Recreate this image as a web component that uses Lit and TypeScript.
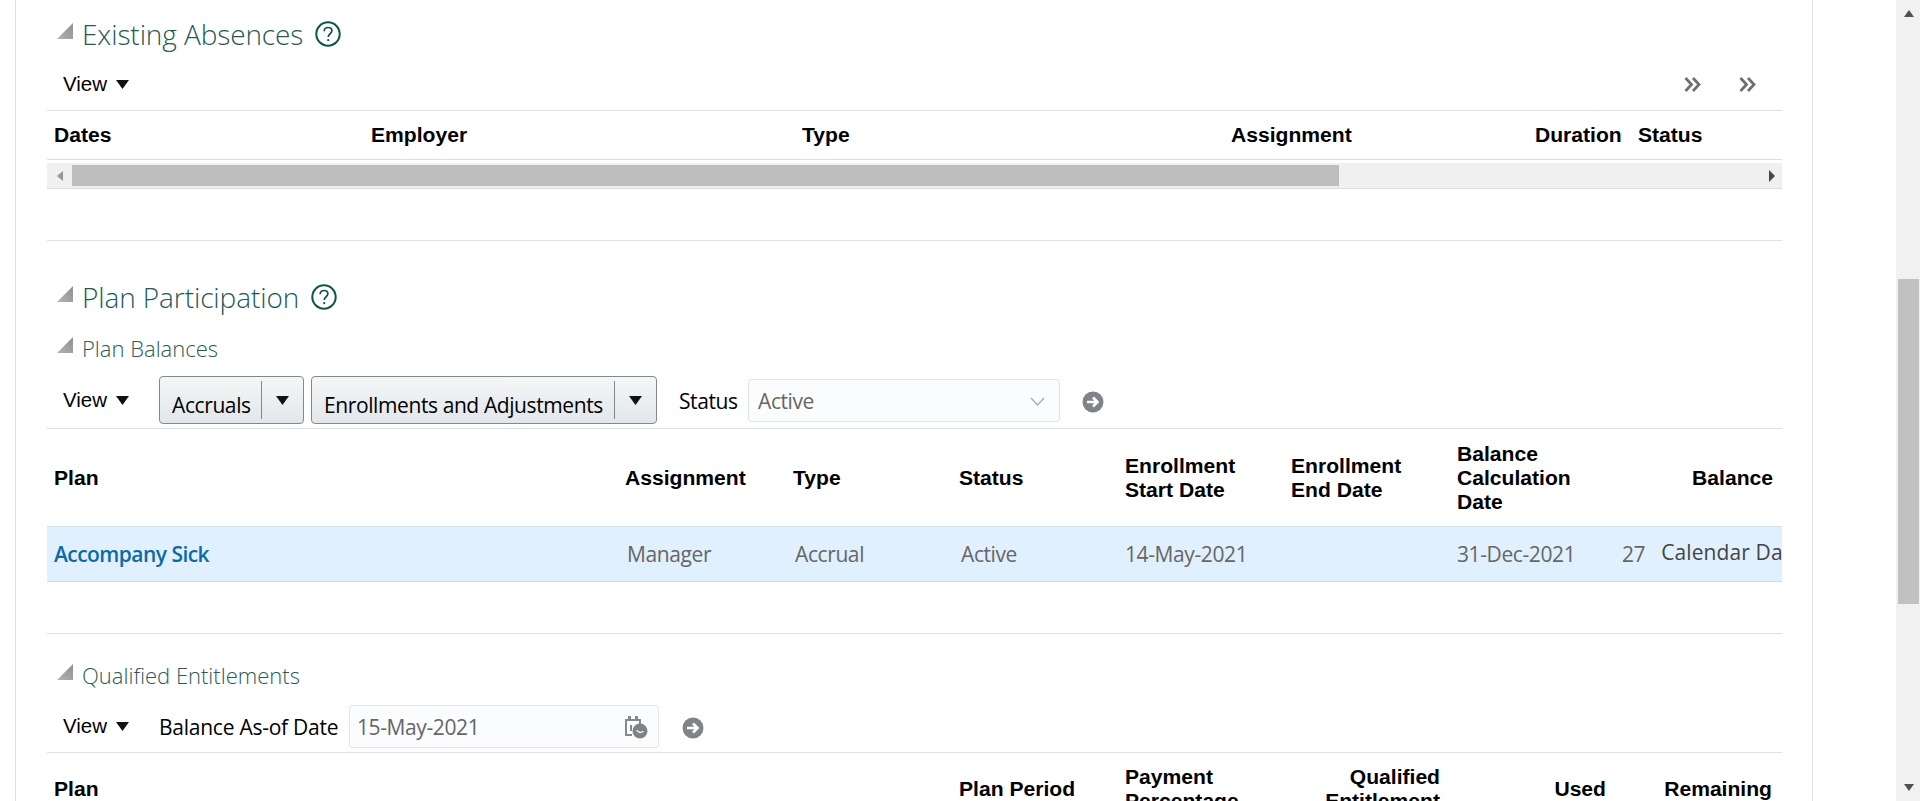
import { LitElement, html, css } from "lit";
import { customElement } from "lit/decorators.js";

const tri = html`<svg class="tri" viewBox="0 0 16 16"><defs><linearGradient id="g" x1="0" y1="1" x2="1" y2="0"><stop offset="0" stop-color="#b4b4b4"/><stop offset="1" stop-color="#8e8e8e"/></linearGradient></defs><path d="M0 16 L16 0 V16 Z" fill="url(#g)"/></svg>`;
const help = html`<svg class="help" viewBox="0 0 26 26"><circle cx="13" cy="13" r="11.7" fill="none" stroke="#0f5449" stroke-width="2"/><path d="M9.2 10.2c0-2.3 1.7-3.7 3.9-3.7s3.8 1.3 3.8 3.3c0 2.9-3.7 3-3.7 6.2" fill="none" stroke="#0f5449" stroke-width="1.7"/><circle cx="13.2" cy="19.2" r="1.1" fill="#0f5449"/></svg>`;
const caret = html`<svg class="caret" viewBox="0 0 13 9"><path d="M0 0 H13 L6.5 9 Z" fill="#111"/></svg>`;
const chev = html`<svg class="chev" viewBox="0 0 17 15"><path d="M1.5 1 L7.5 7.5 L1.5 14 M9 1 L15 7.5 L9 14" fill="none" stroke="#707070" stroke-width="2.8"/></svg>`;
const go = html`<svg class="go" viewBox="0 0 22 22"><circle cx="11" cy="11" r="10.5" fill="#808488"/><path d="M5 11 H15 M11 6.5 L15.5 11 L11 15.5" fill="none" stroke="#fff" stroke-width="2.6"/></svg>`;
const cal = html`<svg class="cal" viewBox="0 0 26 24"><path d="M2 4 H18 V9 H16 V6 H4 V19 H9 V21 H2 Z" fill="#85898d"/><rect x="5" y="1" width="3" height="5" fill="#85898d"/><rect x="12" y="1" width="3" height="5" fill="#85898d"/><path d="M7 10 h2 v6 h-2 z" fill="#85898d"/><circle cx="17" cy="16" r="7.5" fill="#7f8387"/><path d="M13.5 15.5 L17 17.5 L20.5 16.5" fill="none" stroke="#fff" stroke-width="1.3"/></svg>`;

@customElement("app-root")
export class AppRoot extends LitElement {
  static styles = css`
    :host { display: flex; width: 1920px; height: 801px; overflow: hidden; background: #fff; font-family: "Liberation Sans", Arial, sans-serif; color: #000; }
    .gutter { width: 15px; flex: none; }
    .panel { flex: none; border-left: 1px solid #dbe2e6; border-right: 1px solid #dbe2e6; padding-left: 31px; padding-right: 30px; width: 1735px; overflow: hidden; }
    .side { width: 83px; flex: none; }
    .scroll { width: 25px; flex: none; background: #f1f1f1; display: flex; flex-direction: column; align-items: center; }
    .scroll .up { width: 0; height: 0; border-left: 5.5px solid transparent; border-right: 5.5px solid transparent; border-bottom: 7px solid #505050; margin-top: 10px; }
    .scroll .thumb { width: 21px; height: 325px; background: #c1c1c1; margin-top: 262px; }
    .scroll .down { width: 0; height: 0; border-left: 5.5px solid transparent; border-right: 5.5px solid transparent; border-top: 7px solid #505050; margin-top: 180px; }

    .title { display: flex; align-items: center; height: 40px; }
    .t1 { margin-top: 14px; }
    .t2 { margin-top: 36px; }
    .t3 { margin-top: 11px; }
    .t4 { margin-top: 21px; }
    .tri { width: 16px; height: 16px; margin-left: 10px; flex: none; position: relative; top: -3px; }
    .title h2 { margin: 0 0 0 9px; font: 300 28px "Open Sans", sans-serif; color: #1f5a55; white-space: nowrap; letter-spacing: -0.1px; }
    .title h3 { margin: 0 0 0 9px; font: 300 22px "Open Sans", sans-serif; color: #2b5a58; white-space: nowrap; }
    .help { width: 26px; height: 26px; margin-left: 12px; flex: none; }

    .bar { display: flex; align-items: center; border-bottom: 1px solid #dbe2e6; box-sizing: border-box; }
    .bar.a { height: 57px; padding-top: 4px; }
    .bar.b { height: 61px; padding-top: 4px; }
    .bar.c { height: 58px; padding-top: 5px; }
    .view { display: flex; align-items: center; font-size: 20.5px; margin-left: 16px; flex: none; width: 96px; }
    .caret { width: 13px; height: 9px; margin-left: 9px; flex: none; }
    .grow { flex: 1; }
    .chev { width: 17px; height: 15px; margin-right: 26px; margin-left: 21px; flex: none; }
    .chev + .chev { margin-left: 12px; }

    .seg { display: flex; align-items: center; height: 48px; box-sizing: border-box; border: 1px solid #7d8a92; border-radius: 4px; background: linear-gradient(#f4f6f7, #e3e7ea); font: 400 21px "Open Sans", sans-serif; letter-spacing: -0.4px; margin-right: 7px; flex: none; white-space: nowrap; }
    .seg .l { padding: 9px 0 0 12px; flex: 1; }
    .seg .d { width: 1px; height: 38px; background: #7d8a92; flex: none; }
    .seg .caret { margin: 0 14px 0 14px; }
    .s-acc { width: 145px; }
    .s-enr { width: 346px; }
    .flabel { font: 400 21px "Open Sans", sans-serif; letter-spacing: -0.4px; white-space: nowrap; flex: none; padding-top: 2px; }
    .input { height: 43px; box-sizing: border-box; border: 1px solid #e2e6e9; border-radius: 3px; background: #fbfcfd; font: 400 21px "Open Sans", sans-serif; letter-spacing: -0.4px; color: #666; display: flex; align-items: center; padding: 2px 0 0 9px; flex: none; }
    .i1 { width: 312px; }
    .i2 { width: 310px; padding-left: 7px; }
    .v { width: 15px; height: 9px; margin-right: 14px; }
    .cal { width: 26px; height: 24px; margin-right: 9px; }
    .go { width: 22px; height: 22px; margin-left: 22px; flex: none; position: relative; top: 2px; }
    .i2 + .go { margin-left: 23px; }
    .st { margin-left: 15px; width: 69px; }
    .bl { width: 190px; letter-spacing: -0.25px; }

    .cols1 { display: grid; grid-template-columns: 317px 431px 429px 304px 103px 1fr; }
    .cols2 { display: grid; grid-template-columns: 571px 168px 166px 166px 166px 166px 1fr; }
    .cols3 { display: grid; grid-template-columns: 905px 166px 166px 165px 166px 166px; }
    .row-h { font-weight: 700; font-size: 21.1px; line-height: 24px; align-items: center; border-bottom: 1px solid #d9e0e4; }
    .row-h > div { padding-left: 7px; }
    .h1 { height: 49px; box-sizing: border-box; }
    .h2 { height: 97px; }
    .h3 { height: 72px; }
    .row-h > .r { text-align: right; padding-right: 9px; padding-left: 0; }
    .hbal { display: flex; justify-content: space-between; padding-right: 9px; }
    .hbal span:last-child { align-self: center; }
    .data { height: 55px; background: #e1f0fe; border-bottom: 1px solid #d5dde2; box-sizing: border-box; font: 400 21px "Open Sans", sans-serif; letter-spacing: -0.4px; color: #666; align-items: center; overflow: hidden; white-space: nowrap; }
    .data > div { padding-left: 9px; }
    .data > .link { padding-left: 7px; color: #0d6aa5; font-weight: 600; letter-spacing: -0.55px; }
    .data > .date { padding-left: 7px; }
    .data > .tail { display: flex; padding-left: 7px; }
    .tail .d7 { width: 165px; flex: none; }
    .tail .unit { margin-left: 16px; color: #444; position: relative; top: -2px; letter-spacing: 0.1px; }

    .hs { margin-top: 3px; height: 26px; box-sizing: border-box; background: #f0f0f0; border-bottom: 1px solid #d9dde0; display: flex; align-items: center; }
    .hs .al { width: 0; height: 0; margin-left: 10px; border-top: 5px solid transparent; border-bottom: 5px solid transparent; border-right: 6px solid #999; }
    .hs .th { width: 1267px; height: 21px; background: #bdbdbd; margin-left: 9px; margin-top: -1px; }
    .hs .ar { width: 0; height: 0; margin-left: auto; margin-right: 7px; border-top: 6px solid transparent; border-bottom: 6px solid transparent; border-left: 6px solid #444; }
    .sep { border-bottom: 1px solid #dbe2e6; }
    .s1 { height: 51px; }
    .s2 { height: 51px; }
  `;

  render() {
    return html`
      <div class="gutter"></div>
      <div class="panel">
        <div class="title t1">${tri}<h2>Existing Absences</h2>${help}</div>
        <div class="bar a"><div class="view">View${caret}</div><div class="grow"></div>${chev}${chev}</div>
        <div class="cols1 row-h h1"><div>Dates</div><div>Employer</div><div>Type</div><div>Assignment</div><div>Duration</div><div>Status</div></div>
        <div class="hs"><span class="al"></span><span class="th"></span><span class="ar"></span></div>
        <div class="sep s1"></div>

        <div class="title t2">${tri}<h2>Plan Participation</h2>${help}</div>
        <div class="title t3">${tri}<h3>Plan Balances</h3></div>
        <div class="bar b">
          <div class="view">View${caret}</div>
          <div class="seg s-acc"><span class="l">Accruals</span><span class="d"></span>${caret}</div>
          <div class="seg s-enr"><span class="l">Enrollments and Adjustments</span><span class="d"></span>${caret}</div>
          <span class="flabel st">Status</span>
          <div class="input i1">Active<span class="grow"></span><svg class="v" viewBox="0 0 15 9"><path d="M1 1 L7.5 8 L14 1" fill="none" stroke="#a8adb1" stroke-width="1.4"/></svg></div>
          ${go}
        </div>
        <div class="cols2 row-h h2">
          <div>Plan</div><div>Assignment</div><div>Type</div><div>Status</div>
          <div>Enrollment<br />Start Date</div><div>Enrollment<br />End Date</div>
          <div class="hbal"><span>Balance<br />Calculation<br />Date</span><span>Balance</span></div>
        </div>
        <div class="cols2 data">
          <div class="link">Accompany Sick</div><div>Manager</div><div>Accrual</div><div>Active</div>
          <div class="date">14-May-2021</div><div></div>
          <div class="tail"><span class="d7">31-Dec-2021</span><span>27</span><span class="unit">Calendar Days</span></div>
        </div>
        <div class="sep s2"></div>

        <div class="title t4">${tri}<h3>Qualified Entitlements</h3></div>
        <div class="bar c">
          <div class="view">View${caret}</div>
          <span class="flabel bl">Balance As-of Date</span>
          <div class="input i2">15-May-2021<span class="grow"></span>${cal}</div>
          ${go}
        </div>
        <div class="cols3 row-h h3">
          <div>Plan</div><div>Plan Period</div><div>Payment<br />Percentage</div>
          <div class="r">Qualified<br />Entitlement</div><div class="r">Used</div><div class="r">Remaining</div>
        </div>
      </div>
      <div class="side"></div>
      <div class="scroll"><span class="up"></span><span class="thumb"></span><span class="down"></span></div>
    `;
  }
}
